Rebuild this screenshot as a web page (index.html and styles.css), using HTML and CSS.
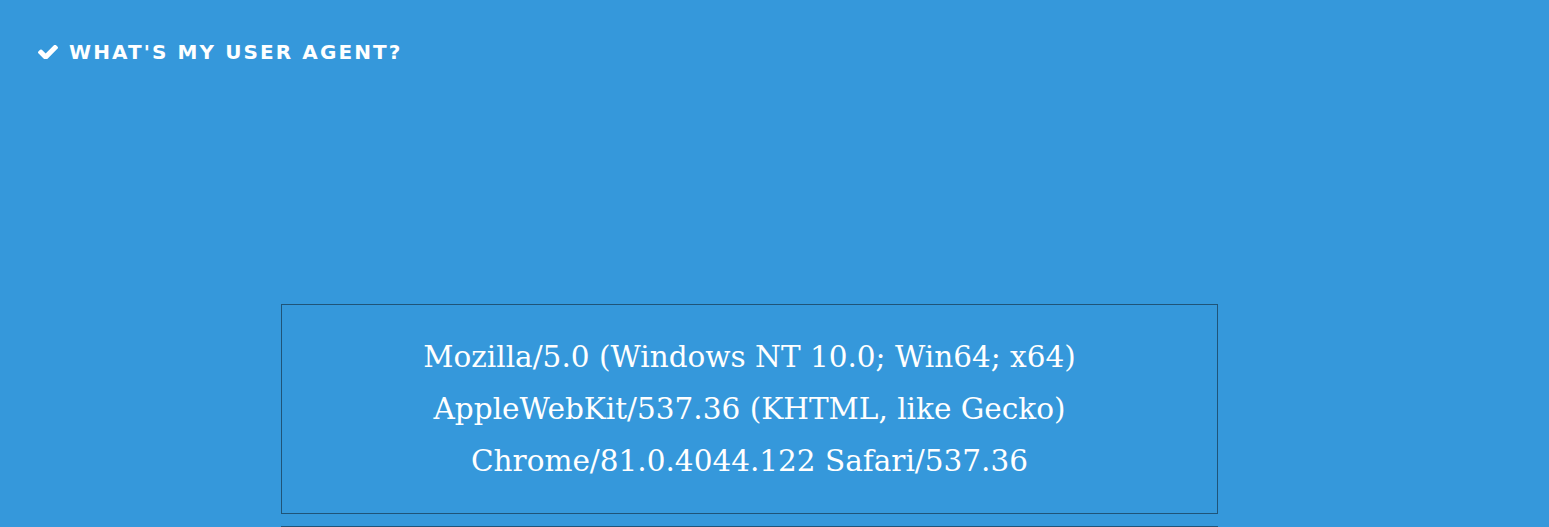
FILE: index.html
```html
<!DOCTYPE html>
<html>
<head>
<meta charset="utf-8">
<link rel="stylesheet" href="styles.css">
</head>
<body>
<header class="top">
  <h1 class="title">
    <svg class="check" viewBox="121 370 1550 1056" width="20" height="14"><path fill="#fff" d="M1671 566q0 40-28 68l-724 724-136 136q-28 28-68 28t-68-28l-136-136-362-362q-28-28-28-68t28-68l136-136q28-28 68-28t68 28l294 295 656-657q28-28 68-28t68 28l136 136q28 28 28 68z"/></svg>
    <span>What's my user agent?</span>
  </h1>
</header>
<main class="content">
  <div class="ua-box">
    <div class="ua">Mozilla/5.0 (Windows NT 10.0; Win64; x64)<br>AppleWebKit/537.36 (KHTML, like Gecko)<br>Chrome/81.0.4044.122 Safari/537.36</div>
  </div>
  <div class="ua-box next"></div>
</main>
</body>
</html>
```
FILE: styles.css
```css
html, body {
  margin: 0;
  padding: 0;
  background: #3598db;
  height: 100%;
  overflow: hidden;
}
.top {
  padding: 40px 0 0 38px;
}
.title {
  margin: 0;
  display: flex;
  align-items: center;
  gap: 11px;
  color: #fff;
  font-family: "DejaVu Sans", sans-serif;
  font-weight: bold;
  font-size: 20px;
  letter-spacing: 2.1px;
  text-transform: uppercase;
  line-height: 24px;
}
.check {
  display: block;
}
.content {
  padding: 240px 0 0 281px;
  display: flex;
  flex-direction: column;
  gap: 12px;
}
.ua-box {
  width: 935px;
  border: 1px solid #1f5478;
  padding: 26px 0;
  text-align: center;
}
.ua {
  color: #fff;
  font-family: "DejaVu Serif", serif;
  font-size: 29.5px;
  line-height: 52px;
}
.next {
  height: 100px;
}
```
